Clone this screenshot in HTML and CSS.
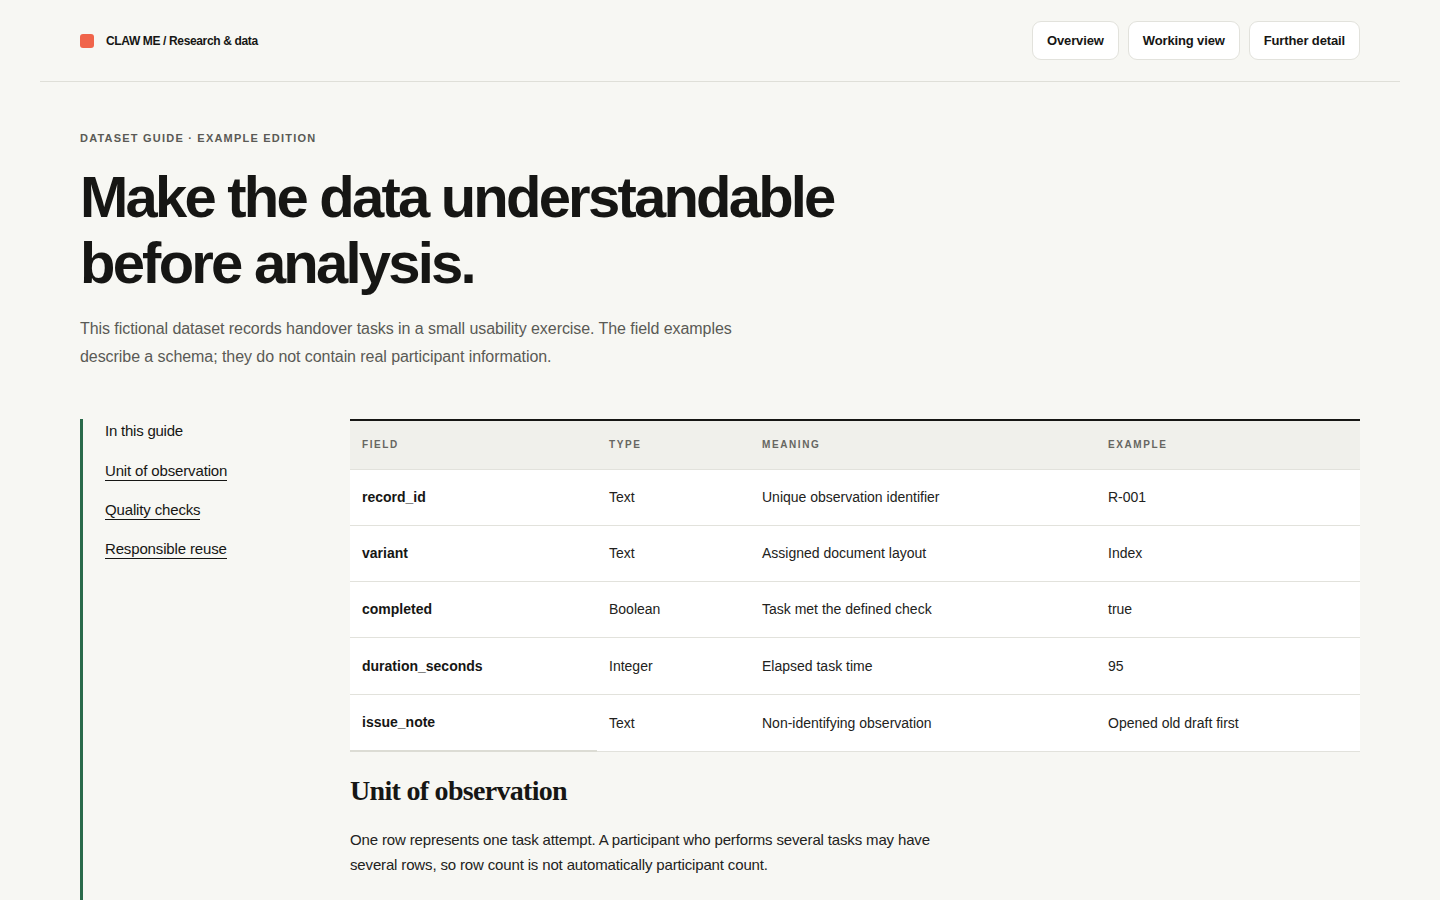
FILE: index.html
```html
<!DOCTYPE html>
<html lang="en">
<head>
<meta charset="utf-8">
<title>Dataset guide</title>
<link rel="stylesheet" href="styles.css">
</head>
<body>
<header class="topbar">
  <div class="brand"><span class="brand-mark"></span><span class="brand-text">CLAW ME / Research &amp; data</span></div>
  <nav class="topnav">
    <a class="navbtn" href="#">Overview</a>
    <a class="navbtn" href="#">Working view</a>
    <a class="navbtn" href="#">Further detail</a>
  </nav>
</header>
<main class="page">
  <section class="hero">
    <p class="eyebrow">DATASET GUIDE · EXAMPLE EDITION</p>
    <h1 class="title">Make the data understandable before analysis.</h1>
    <p class="lede">This fictional dataset records handover tasks in a small usability exercise. The field examples describe a schema; they do not contain real participant information.</p>
  </section>
  <div class="layout">
    <aside class="toc">
      <p class="toc-title">In this guide</p>
      <a class="toc-link" href="#unit">Unit of observation</a>
      <a class="toc-link" href="#quality">Quality checks</a>
      <a class="toc-link" href="#reuse">Responsible reuse</a>
    </aside>
    <div class="content">
      <table class="schema">
        <thead>
          <tr><th class="c1">FIELD</th><th class="c2">TYPE</th><th class="c3">MEANING</th><th class="c4">EXAMPLE</th></tr>
        </thead>
        <tbody>
          <tr><td class="field">record_id</td><td>Text</td><td>Unique observation identifier</td><td>R-001</td></tr>
          <tr><td class="field">variant</td><td>Text</td><td>Assigned document layout</td><td>Index</td></tr>
          <tr><td class="field">completed</td><td>Boolean</td><td>Task met the defined check</td><td>true</td></tr>
          <tr class="tall"><td class="field">duration_seconds</td><td>Integer</td><td>Elapsed task time</td><td>95</td></tr>
          <tr class="tall last"><td class="field">issue_note</td><td>Text</td><td>Non-identifying observation</td><td>Opened old draft first</td></tr>
        </tbody>
      </table>
      <section class="section" id="unit">
        <h2 class="section-title">Unit of observation</h2>
        <p class="section-text">One row represents one task attempt. A participant who performs several tasks may have several rows, so row count is not automatically participant count.</p>
      </section>
    </div>
  </div>
</main>
</body>
</html>
```
FILE: styles.css
```css
* { box-sizing: border-box; }
html, body { margin: 0; padding: 0; }
body {
  background: #f7f7f3;
  color: #161614;
  font-family: "Liberation Sans", Arial, sans-serif;
}
a { color: inherit; }

.topbar {
  margin: 0 40px;
  padding: 0 40px;
  height: 82px;
  border-bottom: 1px solid #dfdfd8;
  display: flex;
  align-items: center;
  justify-content: space-between;
}
.brand { display: flex; align-items: center; gap: 12px; }
.brand-mark {
  width: 14px; height: 14px;
  background: #f0644a;
  border-radius: 3px;
}
.brand-text { font-size: 12px; font-weight: 700; letter-spacing: -0.03em; }
.topnav { display: flex; gap: 9px; }
.navbtn {
  display: inline-flex; align-items: center;
  height: 39px;
  padding: 0 14px;
  background: #fff;
  border: 1px solid #e2e2dc;
  border-radius: 9px;
  font-size: 13px;
  font-weight: 700;
  text-decoration: none;
  letter-spacing: -0.01em;
}

.page { padding: 0 80px; }
.hero { padding-top: 50px; }
.eyebrow {
  margin: 0;
  font-size: 11px;
  font-weight: 700;
  letter-spacing: 0.11em;
  color: #5a5a55;
}
.title {
  margin: 20px 0 0;
  max-width: 800px;
  font-size: 58px;
  line-height: 66px;
  font-weight: 700;
  letter-spacing: -0.048em;
}
.lede {
  margin: 19px 0 0;
  max-width: 690px;
  font-size: 16px;
  line-height: 28px;
  color: #5a5a55;
  letter-spacing: -0.004em;
}

.layout {
  margin-top: 48px;
  display: grid;
  grid-template-columns: 270px 1fr;
}
.toc {
  border-left: 3px solid #2a6a4a;
  padding-left: 22px;
  min-height: 500px;
  display: flex;
  flex-direction: column;
  align-items: flex-start;
}
.toc-title { margin: 2px 0 0; font-size: 15px; line-height: 20px; letter-spacing: -0.015em; }
.toc-link {
  margin-top: 19px;
  font-size: 15px;
  line-height: 19px;
  text-decoration: none;
  border-bottom: 1px solid #161614;
  letter-spacing: -0.01em;
}
.toc-title + .toc-link { margin-top: 20px; }

.schema {
  width: 100%;
  border-collapse: collapse;
  border-top: 2px solid #161614;
  font-size: 14px;
}
.schema th {
  background: #f0f0eb;
  height: 49px;
  padding: 0 12px;
  text-align: left;
  font-size: 10px;
  font-weight: 700;
  letter-spacing: 0.16em;
  color: #666661;
  border-bottom: 1px solid #e2e2dc;
}
.c1 { width: 247px; }
.c2 { width: 153px; }
.c3 { width: 346px; }
.schema td {
  background: #fff;
  height: 56px;
  padding: 0 12px;
  border-bottom: 1px solid #e2e2dc;
  color: #222220;
}
.schema td.field { font-weight: 700; color: #161614; }
.schema tr.tall td { height: 57px; }
.schema tr.last td.field { border-bottom: 2px solid #dcdcd4; }

.section { padding-top: 22px; }
.section-title {
  margin: 0;
  font-family: "Liberation Serif", "Times New Roman", serif;
  font-size: 28px;
  line-height: 34px;
  font-weight: 700;
  letter-spacing: -0.025em;
}
.section-text {
  margin: 19px 0 0;
  max-width: 600px;
  font-size: 15px;
  line-height: 25px;
  color: #222220;
  letter-spacing: -0.01em;
}
```
